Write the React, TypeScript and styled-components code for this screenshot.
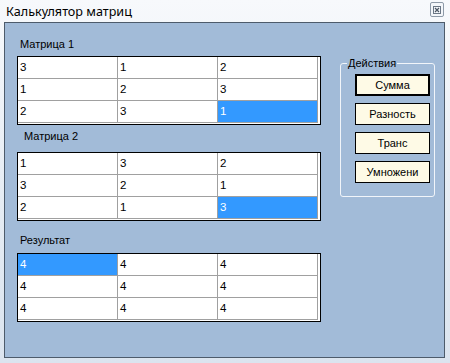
import styled, { createGlobalStyle } from 'styled-components'

const GlobalS = createGlobalStyle`
    html, body {
        margin: 0;
        padding: 0;
        background: #dfe7f1;
    }
    * {
        box-sizing: border-box;
    }
`

const WindowS = styled.div`
    display: flex;
    flex-direction: column;
    width: 450px;
    height: 363px;
    padding: 0 5px 5px 4px;
    background: linear-gradient(180deg, #f7f9fc 0%, #e4ebf3 60%, #dbe4ef 100%);
    font-family: "Liberation Sans", Arial, sans-serif;
    overflow: hidden;
`

const TitleBarS = styled.div`
    display: flex;
    align-items: center;
    justify-content: space-between;
    height: 22px;
    padding: 0 1px 0 2px;
`

const TitleTxtS = styled.span`
    font-family: "Noto Sans", "Open Sans", sans-serif;
    font-size: 12.6px;
    color: #000;
`

const CloseBtnS = styled.div`
    display: flex;
    align-items: center;
    justify-content: center;
    width: 14px;
    height: 15px;
    margin-top: -3px;
    border: 1px solid #8e9aa8;
    border-radius: 2px;
    background: #f3f6fa;
`

const ClientS = styled.div`
    flex: 1;
    display: flex;
    align-items: flex-start;
    border: 1px solid #4d5b6b;
    background: #a2bbd8;
`

const LeftColS = styled.div`
    display: flex;
    flex-direction: column;
    padding-left: 12px;
`

const LabelS = styled.div<{ indent: number, top: number, bottom: number }>`
    font-size: 11px;
    line-height: 13px;
    color: #000;
    padding-left: ${ ({ indent }) => indent }px;
    margin-top: ${ ({ top }) => top }px;
    margin-bottom: ${ ({ bottom }) => bottom }px;
`

const GridS = styled.div`
    display: grid;
    grid-template-columns: repeat(3, 100px);
    width: 304px;
    padding: 0 2px 1px 0;
    border: 1px solid #000;
    background: #fff;
`

const CellS = styled.div<{ selected: boolean }>`
    height: 22px;
    padding-left: 2px;
    border-right: 1px solid #a0a0a0;
    border-bottom: 1px solid #a0a0a0;
    font-size: 11.5px;
    line-height: 21px;
    color: ${ ({ selected }) => selected ? '#fff' : '#000' };
    background: ${ ({ selected }) => selected ? '#3399ff' : '#fff' };
`

const GroupS = styled.fieldset`
    display: flex;
    flex-direction: column;
    gap: 7px;
    width: 95px;
    margin: 34px 0 0 19px;
    min-width: 0;
    padding: 4px 4px 13px 14px;
    border: 1px solid #f1f5fa;
    border-radius: 3px;
`

const LegendS = styled.legend`
    margin-left: -8px;
    padding: 0 1px;
    font-size: 11px;
    line-height: 13px;
    color: #000;
`

const ActionBtnS = styled.div<{ primary?: boolean }>`
    display: flex;
    align-items: center;
    justify-content: center;
    width: 75px;
    height: 22px;
    border: ${ ({ primary }) => primary ? '2px' : '1px' } solid #000;
    background: #fefae6;
    font-size: 11px;
    color: #000;
`

const m1 = [ [ 3, 1, 2 ], [ 1, 2, 3 ], [ 2, 3, 1 ] ]
const m2 = [ [ 1, 3, 2 ], [ 3, 2, 1 ], [ 2, 1, 3 ] ]
const res = [ [ 4, 4, 4 ], [ 4, 4, 4 ], [ 4, 4, 4 ] ]

const Matrix = ({ data, sel }: { data: number[][], sel: [number, number] }) => (
    <GridS>
        {data.map((row, r) => row.map((v, c) =>
            <CellS key={ `${ r }-${ c }` } selected={ r === sel[0] && c === sel[1] }>{ v }</CellS>
        ))}
    </GridS>
)

const App = () => {
    return (
        <>
            <GlobalS />
            <WindowS>
                <TitleBarS>
                    <TitleTxtS>Калькулятор матриц</TitleTxtS>
                    <CloseBtnS>
                        <svg width="8" height="8" viewBox="0 0 8 8">
                            <rect x="0.5" y="0.5" width="7" height="7" fill="none" stroke="#6b7785" strokeWidth="1" />
                            <path d="M2 2 L6 6 M6 2 L2 6" stroke="#4a5563" strokeWidth="1.2" />
                        </svg>
                    </CloseBtnS>
                </TitleBarS>
                <ClientS>
                    <LeftColS>
                        <LabelS indent={ 3 } top={ 15 } bottom={ 5 }>Матрица 1</LabelS>
                        <Matrix data={ m1 } sel={ [ 2, 2 ] } />
                        <LabelS indent={ 7 } top={ 5 } bottom={ 9 }>Матрица 2</LabelS>
                        <Matrix data={ m2 } sel={ [ 2, 2 ] } />
                        <LabelS indent={ 3 } top={ 13 } bottom={ 6 }>Результат</LabelS>
                        <Matrix data={ res } sel={ [ 0, 0 ] } />
                    </LeftColS>
                    <GroupS>
                        <LegendS>Действия</LegendS>
                        <ActionBtnS primary>Сумма</ActionBtnS>
                        <ActionBtnS>Разность</ActionBtnS>
                        <ActionBtnS>Транс</ActionBtnS>
                        <ActionBtnS>Умножени</ActionBtnS>
                    </GroupS>
                </ClientS>
            </WindowS>
        </>
    )
}

export default App
